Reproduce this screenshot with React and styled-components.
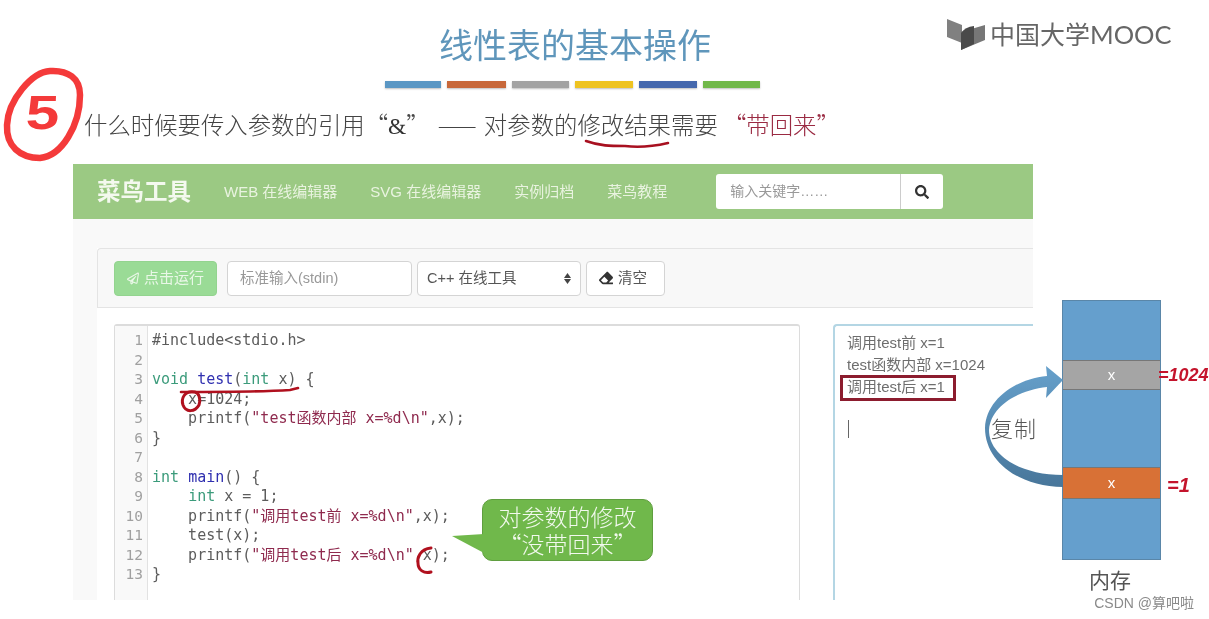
import React from "react";
import styled, { createGlobalStyle } from "styled-components";
import { FaRegPaperPlane, FaEraser, FaSearch } from "react-icons/fa";

const Global = createGlobalStyle`
  html, body { margin: 0; padding: 0; background: #fff; }
  body { font-family: "Liberation Sans", "Noto Sans CJK SC", sans-serif; overflow: hidden; }
`;
const CJK = `"Liberation Sans", "Noto Sans CJK SC", sans-serif`;
const CJKFirst = `"Noto Sans CJK SC", "Liberation Sans", sans-serif`;
const Slide = styled.div`
  position: relative; width: 1209px; height: 619px; background: #fff; overflow: hidden;
  display: flex; flex-direction: column; filter: blur(0.45px);
`;
const Head = styled.header`
  height: 164px; box-sizing: border-box; padding-top: 24px;
  display: flex; flex-direction: column;
`;
const Title = styled.h1`
  margin: 0 0 0 439px; font: 400 34px/44px ${CJK}; color: #5f96bb; letter-spacing: 0;
`;
const Bars = styled.div`
  display: flex; gap: 6px; margin: 13px 0 0 385px;
`;
const Bar = styled.span`
  width: ${p => p.$w}px; height: 7px; background: ${p => p.$c}; box-shadow: 0 1px 2px rgba(0,0,0,.25);
`;
const Question = styled.p`
  margin: 21px 0 0 84px; font: 300 23.4px/30px ${CJKFirst}; color: #444; white-space: pre;
`;
const Latin = styled.span` font-family: "Liberation Serif", serif; color: #333; `;
const Dash = styled.span` margin: 0 2px 0 3px; `;
const Red = styled.span` color: #9a2a42; `;
const Logo = styled.div`
  position: absolute; left: 946px; top: 16px; display: flex; align-items: center; gap: 3px;
  font: 400 25px/34px "Noto Sans CJK SC", sans-serif; color: #666;
`;
const LogoLatin = styled.span` font: 400 25.5px/34px "Lato", sans-serif; `;
const Browser = styled.section`
  margin-left: 73px; width: 960px; height: 436px; background: #f9f9f9; overflow: hidden;
`;
const Nav = styled.nav`
  height: 55px; background: #9bc983; display: flex; align-items: center; padding-left: 24px;
`;
const Brand = styled.div`
  font: 700 23.5px/30px ${CJK}; color: #f4f9ef; margin-right: 33px;
`;
const NavLink = styled.a`
  font: 400 15px/20px ${CJK}; color: #e9f3e0; margin-right: 33px; white-space: nowrap;
`;
const Search = styled.div`
  margin-left: 16px; display: flex; width: 227px; height: 35px; background: #fff; border-radius: 3px;
`;
const SearchText = styled.div`
  flex: 1; border-right: 1px solid #ccc; padding-left: 14px; font: 400 14px/35px ${CJK}; color: #999;
`;
const SearchBtn = styled.div`
  width: 42px; display: flex; align-items: center; justify-content: center; color: #333;
`;
const Panel = styled.div`
  margin: 29px 0 0 24px; height: 400px; background: #fff;
`;
const Toolbar = styled.div`
  height: 60px; box-sizing: border-box; background: #f8f8f8; border: 1px solid #e4e4e4; border-right: 0; border-radius: 4px 0 0 0;
  display: flex; align-items: center; padding: 0 0 0 16px; gap: 5px;
`;
const Control = styled.div`
  box-sizing: border-box; height: 35px; width: ${p => p.$w}px; border: 1px solid #d4d4d4; border-radius: 4px; background: #fff;
  display: flex; align-items: center; gap: 5px; padding: 0 ${p => p.$pad ?? 12}px; font: 400 14.5px/20px ${CJK}; color: ${p => p.$c || "#555"}; white-space: nowrap;
`;
const RunBtn = styled(Control)`
  background: #9adb96; border-color: #93d48f; color: #e9f7e7; margin-right: 5px; font-size: 15px;
`;
const SelectArrows = styled.span`
  margin-left: auto; display: flex; flex-direction: column; gap: 1px;
`;
const Work = styled.div`
  display: flex; padding: 16px 0 0 17px; gap: 33px;
`;
const Code = styled.div`
  width: 686px; height: 290px; box-sizing: border-box; border: 1px solid #dcdcdc; border-top-width: 2px; border-bottom: 0; border-radius: 3px 3px 0 0; display: flex; background: #fff;
`;
const Gutter = styled.div`
  width: 33px; box-sizing: border-box; background: #f9f9f9; border-right: 1px solid #e2e2e2; padding: 5px 4px 0 0; text-align: right;
  font: 400 14.5px/19.5px "DejaVu Sans Mono", monospace; color: #a0a0a0;
`;
const Lines = styled.div`
  padding: 5px 0 0 4px; font: 400 15px/19.5px "DejaVu Sans Mono", "Noto Sans CJK SC", monospace; color: #5c5c5c; white-space: pre;
`;
const Line = styled.div` height: 19.5px; `;
const Kw = styled.span` color: #3b9b7b; `;
const Def = styled.span` color: #3030b0; `;
const Str = styled.span` color: #8f2a4e; `;
const Output = styled.div`
  position: relative; flex: 1; height: 290px; box-sizing: border-box; border: 2px solid #b4d6e4; border-right: 0; border-bottom: 0; border-radius: 4px 0 0 0;
  padding: 6px 0 0 12px; font: 400 15px/22px ${CJK}; color: #6e6e6e; white-space: nowrap;
`;
const OutRow = styled.div` height: 22px; `;
const Caret = styled.div` width: 1px; height: 18px; background: #666; margin: 22px 0 0 1px; `;
const OutMark = styled.div`
  position: absolute; left: 5px; top: 49px; width: 116px; height: 26px; box-sizing: border-box; border: 3px solid #8c1c2e;
`;
const Callout = styled.div`
  position: absolute; left: 482px; top: 499px; width: 171px; height: 62px; box-sizing: border-box;
  background: #70b84b; border: 1px solid #5f9e3f; border-radius: 10px; color: #f2f9ee;
  font: 300 23px/27px ${CJKFirst}; text-align: center; padding-top: 3px;
`;
const CalloutTail = styled.svg` position: absolute; left: 450px; top: 525px; z-index: 1; `;
const Memory = styled.div`
  position: absolute; left: 1062px; top: 300px; width: 99px; height: 260px; box-sizing: border-box; background: #659fcd; border: 1px solid #5a86a8;
  display: flex; flex-direction: column;
`;
const Cell = styled.div`
  height: ${p => p.$h}px; margin-top: ${p => p.$t}px; background: ${p => p.$c}; border-top: 1px solid #777; border-bottom: 1px solid #777; box-sizing: border-box;
  color: #fff; font: 400 15px/${p => p.$h - 2}px ${CJK}; text-align: center;
`;
const MemLabel = styled.div`
  position: absolute; left: 1089px; top: 568px; font: 400 21px/26px ${CJK}; color: #555;
`;
const CopyLabel = styled.div`
  position: absolute; left: 991px; top: 415px; font: 300 22px/30px ${CJK}; color: #555; letter-spacing: 1px; z-index: 3;
`;
const Ink = styled.svg` position: absolute; inset: 0; pointer-events: none; z-index: 2; `;
const Five = styled.div`
  position: absolute; left: 26px; top: 88px; font: 700 48px/50px "Liberation Sans", sans-serif; color: #f43a3a; z-index: 2;
  transform: scaleX(1.25) skewX(-2deg); transform-origin: left center;
`;
const Hand = styled.div`
  position: absolute; left: ${p => p.$x}px; top: ${p => p.$y}px; font: italic 700 ${p => p.$s}px/24px "Liberation Sans", sans-serif; color: #c4142c; white-space: nowrap;
`;
const Mark = styled.div`
  position: absolute; right: 15px; bottom: 7px; font: 400 14px/18px ${CJK}; color: #8a8a8a; white-space: nowrap;
`;

const code = [
  <>#include&lt;stdio.h&gt;</>, "",
  <><Kw>void</Kw> <Def>test</Def>(<Kw>int</Kw> x) {"{"}</>,
  "    x=1024;",
  <>    printf(<Str>"test函数内部 x=%d\n"</Str>,x);</>,
  "}", "",
  <><Kw>int</Kw> <Def>main</Def>() {"{"}</>,
  <>    <Kw>int</Kw> x = 1;</>,
  <>    printf(<Str>"调用test前 x=%d\n"</Str>,x);</>,
  "    test(x);",
  <>    printf(<Str>"调用test后 x=%d\n"</Str>,x);</>,
  "}",
];

export default function App() {
  return (
    <>
      <Global />
      <Slide>
        <Head>
          <Title>线性表的基本操作</Title>
          <Bars>
            <Bar $w={56} $c="#5b97c4" /><Bar $w={59} $c="#c8683a" /><Bar $w={57} $c="#a3a3a3" />
            <Bar $w={58} $c="#eec321" /><Bar $w={58} $c="#4568ad" /><Bar $w={57} $c="#71b84a" />
          </Bars>
          <Question>什么时候要传入参数的引用“<Latin>&amp;</Latin>” <Dash>——</Dash> 对参数的修改结果需要 <Red>“带回来”</Red></Question>
        </Head>
        <Logo>
          <svg width="41" height="34" viewBox="0 0 41 34">
            <path d="M1 2 L16 8 L16 26 L1 20Z" fill="#808080" />
            <path d="M15 15 L39 8 L39 23 L15 33Z" fill="#777" />
            <path d="M15 16 Q19 10 28 9 L28 27 L15 33Z" fill="#4a4a4a" />
          </svg>
          <span>中国大学<LogoLatin>MOOC</LogoLatin></span>
        </Logo>
        <Browser>
          <Nav>
            <Brand>菜鸟工具</Brand>
            <NavLink>WEB 在线编辑器</NavLink>
            <NavLink>SVG 在线编辑器</NavLink>
            <NavLink>实例归档</NavLink>
            <NavLink>菜鸟教程</NavLink>
            <Search>
              <SearchText>输入关键字……</SearchText>
              <SearchBtn><FaSearch size={14} color="#333" /></SearchBtn>
            </Search>
          </Nav>
          <Panel>
            <Toolbar>
              <RunBtn $w={103}>
                <FaRegPaperPlane size={15} color="#e9f7e7" />
                点击运行
              </RunBtn>
              <Control $w={185} $c="#999">标准输入(stdin)</Control>
              <Control $w={164} $pad={9}>C++ 在线工具
                <SelectArrows>
                  <svg width="7" height="5" viewBox="0 0 7 5"><path d="M3.5 0L7 5H0z" fill="#444" /></svg>
                  <svg width="7" height="5" viewBox="0 0 7 5"><path d="M3.5 5L7 0H0z" fill="#444" /></svg>
                </SelectArrows>
              </Control>
              <Control $w={79}>
                <FaEraser size={14} color="#333" />
                清空
              </Control>
            </Toolbar>
            <Work>
              <Code>
                <Gutter>{code.map((_, i) => <div key={i}>{i + 1}</div>)}</Gutter>
                <Lines>{code.map((c, i) => <Line key={i}>{c}</Line>)}</Lines>
              </Code>
              <Output>
                <OutRow>调用test前 x=1</OutRow>
                <OutRow>test函数内部 x=1024</OutRow>
                <OutRow>调用test后 x=1</OutRow>
                <Caret />
                <OutMark />
              </Output>
            </Work>
          </Panel>
        </Browser>

        <CalloutTail width="40" height="36" viewBox="0 0 40 36">
          <path d="M34 9 L2 11 L34 28Z" fill="#70b84b" />
        </CalloutTail>
        <Callout>对参数的修改<br />“没带回来”</Callout>

        <Ink width="1209" height="619" viewBox="0 0 1209 619" fill="none">
          <defs>
            <linearGradient id="sweep" x1="0" y1="1" x2="0" y2="0">
              <stop offset="0" stopColor="#48769a" />
              <stop offset="1" stopColor="#66a0cb" />
            </linearGradient>
          </defs>
          <path d="M1063 487 C1020 487 985 462 985 428 C986 400 1015 379 1047 376 L1046 366 L1063 380 L1046 398 L1047 387 C1020 390 991 405 989 430 C989 455 1020 475 1063 475Z" fill="url(#sweep)" />
          <path d="M50 71 C32 72 8 100 7 125 C6 146 20 158 40 158 C62 156 80 125 80 95 C80 78 68 70 50 71" stroke="#f43a3a" strokeWidth="6.5" />
          <path d="M586 141 C600 146 610 146 625 146 C640 148 655 146 668 143" stroke="#a81020" strokeWidth="2.6" strokeLinecap="round" />
          <path d="M181 392 C215 392 260 392 290 390 L298 388" stroke="#b0101e" strokeWidth="2.6" strokeLinecap="round" />
          <path d="M195 392 C184 390 181 399 183 405 C186 413 195 412 199 405 C201 399 199 393 195 392" stroke="#b0101e" strokeWidth="3" />
          <path d="M431 548 C420 549 417 558 418 563 C418 570 424 574 431 572" stroke="#b0101e" strokeWidth="3" strokeLinecap="round" />
        </Ink>
        <Five>5</Five>

        <Memory>
          <Cell $t={59} $h={30} $c="#a5a5a5">x</Cell>
          <Cell $t={77} $h={32} $c="#d87136">x</Cell>
        </Memory>
        <CopyLabel>复制</CopyLabel>
        <MemLabel>内存</MemLabel>
        <Hand $x={1158} $y={363} $s={18}>=1024</Hand>
        <Hand $x={1167} $y={473} $s={20}>=1</Hand>
        <Mark>CSDN @算吧啦</Mark>
      </Slide>
    </>
  );
}
